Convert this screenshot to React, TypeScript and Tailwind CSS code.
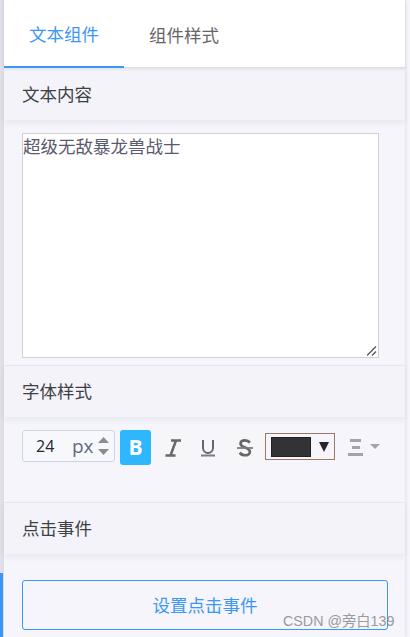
import React from 'react';

const cjk = '"Noto Sans CJK SC", "Noto Sans", sans-serif';
const sans = '"Open Sans", sans-serif';

function SectionHeader({ title, border }: { title: string; border?: boolean }) {
  return (
    <div className={`relative z-10 flex h-[52px] items-center bg-[#f3f3f9] pl-[18px] text-[17.5px] text-[#3f3f46] shadow-[0_3px_6px_rgba(60,60,90,0.07)] ${border ? 'border-t border-[#e6e6ee]' : ''}`}>
      {title}
    </div>
  );
}

export default function App() {
  return (
    <div className="relative flex h-[637px] w-[410px] overflow-hidden bg-[#f5f5fb]" style={{ fontFamily: cjk }}>
      {/* left rail */}
      <div className="flex w-[4px] shrink-0 flex-col justify-end bg-[#e0e0e9]">
        <div className="h-[64px] w-[3px] bg-[#3b96f5]" />
      </div>

      <div className="flex h-full w-[401px] shrink-0 flex-col shadow-[1px_0_3px_rgba(60,60,90,0.1)]">
        {/* tabs */}
        <div className="relative z-20 flex h-[68px] shrink-0 border-b border-[#dcdce2] bg-white text-[17.5px] shadow-[0_1px_3px_rgba(60,60,90,0.12)]">
          <div className="-mb-px flex h-[68px] w-[120px] items-center justify-center border-b-2 border-[#3b96f5] pt-[3px] text-[#3b96f5]">文本组件</div>
          <div className="flex h-[66px] w-[120px] items-center justify-center pt-[5px] text-[#666]">组件样式</div>
        </div>

        <SectionHeader title="文本内容" />
        <div className="flex h-[245px] shrink-0 flex-col pt-[13px] pl-[18px]">
          <div className="relative h-[225px] w-[357px]">
            <textarea
              readOnly
              value="超级无敌暴龙兽战士"
              className="h-full w-full resize-none border border-[#cfcfd4] bg-white text-[17.5px] leading-[23px] text-[#5a5a6e]"
              style={{ fontFamily: cjk }}
            />
            <svg className="absolute right-[2px] bottom-[2px]" width="10" height="10" viewBox="0 0 10 10">
              <path d="M0 9.500L9 0.500M5 9.500L9 5.500" stroke="#5f5f5f" strokeWidth="1.500" />
            </svg>
          </div>
        </div>

        <SectionHeader title="字体样式" border />
        <div className="flex h-[85px] shrink-0 items-start pt-[13px] pl-[18px]">
          <div className="flex h-[32px] w-[93px] items-center rounded-[3px] border border-[#ccd6e2] bg-[#f7f8fc]">
            <span className="w-[49px] pl-[13px] text-[16px] text-[#22262e]" style={{ fontFamily: sans }}>24</span>
            <span className="text-[19px] text-[#5f6b80]" style={{ fontFamily: sans }}>px</span>
            <div className="ml-[4px] flex flex-col gap-[6px]">
              <svg width="11" height="6" viewBox="0 0 11 6"><path d="M5.500 0L11 6H0Z" fill="#8c8c90" /></svg>
              <svg width="11" height="6" viewBox="0 0 11 6"><path d="M0 0H11L5.500 6Z" fill="#8c8c90" /></svg>
            </div>
          </div>
          <div className="ml-[5px] flex h-[35px] w-[31px] items-center justify-center rounded-[3px] bg-[#2eb6ff] text-[21px] font-bold text-white" style={{ fontFamily: sans }}>
            B
          </div>
          <div className="ml-[5px] flex h-[35px] w-[33px] items-center justify-center bg-[#f6f6f9]">
            <svg width="16" height="18" viewBox="0 0 16 18"><path d="M6 1.500h10M0.500 16.500h10M11 1.500L5.500 16.500" fill="none" stroke="#66666c" strokeWidth="2.500" /></svg>
          </div>
          <div className="flex h-[35px] w-[38px] items-center justify-center bg-[#f5f5fb]">
            <svg width="16" height="20" viewBox="0 0 16 20"><path d="M3 2v8a5 5 0 0 0 10 0V2" fill="none" stroke="#66666c" strokeWidth="2" /><path d="M1 17.500h14" stroke="#7a7a80" strokeWidth="2" /></svg>
          </div>
          <div className="flex h-[35px] w-[36px] items-center justify-center bg-[#f6f6f9]">
            <svg width="16" height="20" viewBox="0 0 18 20"><path d="M14.500 4C13 2 11 1.500 9 1.500 6 1.500 4 3 4 5.200c0 5 10.500 3.500 10.500 9 0 2.500-2.500 4-5.500 4-2.500 0-4.500-1-6-3" fill="none" stroke="#66666c" strokeWidth="3" /><path d="M0 10h18" stroke="#7d7d82" strokeWidth="2" /></svg>
          </div>
          <div className="mt-[3px] ml-[2px] flex h-[27px] w-[70px] items-center border border-[#9a7a64] pl-[5px]">
            <div className="h-[20px] w-[40px] border border-[#222] bg-[#333336]" />
            <svg className="ml-[8px]" width="10" height="10" viewBox="0 0 10 10"><path d="M0 0H10L5 10Z" fill="#26262c" /></svg>
          </div>
          <div className="mt-[3px] ml-[13px] flex h-[27px] items-center gap-[7px]">
            <svg width="15" height="20" viewBox="0 0 15 20"><path d="M2 2h11v3H2zM4 9h8v3H4zM0 16h15v3H0z" fill="#a3a3a8" /></svg>
            <svg width="10" height="5" viewBox="0 0 10 5"><path d="M0 0H10L5 5Z" fill="#a3a3a8" /></svg>
          </div>
        </div>

        <SectionHeader title="点击事件" border />
        <div className="pt-[25px] pl-[18px]">
          <div className="mt-px flex h-[50px] w-[366px] items-center justify-center rounded-[3px] border border-[#3b96f5] text-[17.5px] text-[#3b96f5]">
            设置点击事件
          </div>
        </div>
      </div>

      {/* CSDN watermark */}
      <span className="absolute top-[611px] left-[283px] text-[14.300px] text-[#9a9a9e]" style={{ fontFamily: '"Liberation Sans", "Noto Sans CJK SC", sans-serif' }}>
        CSDN @旁白139
      </span>
    </div>
  );
}
